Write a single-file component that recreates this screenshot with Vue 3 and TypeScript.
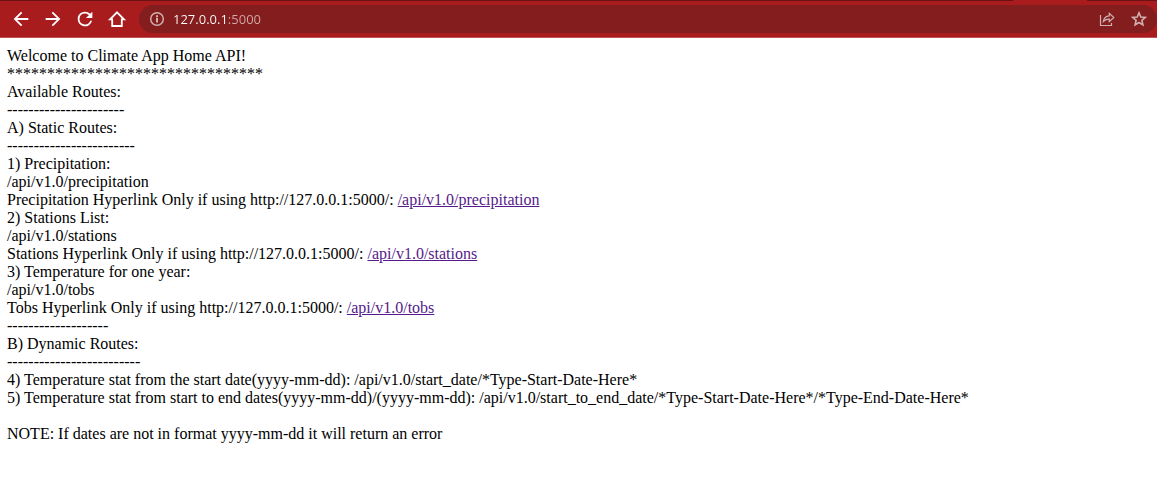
<script setup lang="ts">
import { ref } from 'vue'

interface Line {
  text: string
  link?: string
}

const address = ref('127.0.0.1:5000')
const starred = ref(false)

const dashes = (count: number): Line => ({ text: '-'.repeat(count) })
const hyperlink = (name: string, path: string): Line => ({
  text: `${name} Hyperlink Only if using http://127.0.0.1:5000/: `,
  link: path,
})

const lines: Line[] = [
  { text: 'Welcome to Climate App Home API!' },
  { text: '*'.repeat(32) },
  { text: 'Available Routes:' },
  dashes(22),
  { text: 'A) Static Routes:' },
  dashes(24),
  { text: '1) Precipitation:' },
  { text: '/api/v1.0/precipitation' },
  hyperlink('Precipitation', '/api/v1.0/precipitation'),
  { text: '2) Stations List:' },
  { text: '/api/v1.0/stations' },
  hyperlink('Stations', '/api/v1.0/stations'),
  { text: '3) Temperature for one year:' },
  { text: '/api/v1.0/tobs' },
  hyperlink('Tobs', '/api/v1.0/tobs'),
  dashes(19),
  { text: 'B) Dynamic Routes:' },
  dashes(25),
  { text: '4) Temperature stat from the start date(yyyy-mm-dd): /api/v1.0/start_date/*Type-Start-Date-Here*' },
  { text: '5) Temperature stat from start to end dates(yyyy-mm-dd)/(yyyy-mm-dd): /api/v1.0/start_to_end_date/*Type-Start-Date-Here*/*Type-End-Date-Here*' },
  { text: '' },
  { text: 'NOTE: If dates are not in format yyyy-mm-dd it will return an error' },
]
</script>

<template>
  <div class="browser">
    <div class="tab-edge"><span class="active-tab"></span></div>
    <header class="toolbar">
      <nav class="nav" aria-label="Browser navigation">
        <button type="button" class="icon-button" aria-label="Back">
          <svg viewBox="0 0 24 24" width="22" height="22"><path d="M20 11H7.83l5.59-5.59L12 4l-8 8 8 8 1.41-1.41L7.83 13H20z" /></svg>
        </button>
        <button type="button" class="icon-button" aria-label="Forward">
          <svg viewBox="0 0 24 24" width="22" height="22"><path d="M12 4l-1.41 1.41L16.17 11H4v2h12.17l-5.58 5.59L12 20l8-8z" /></svg>
        </button>
        <button type="button" class="icon-button" aria-label="Reload">
          <svg viewBox="0 0 24 24" width="22" height="22"><path d="M17.65 6.35A7.96 7.96 0 0 0 12 4a8 8 0 1 0 7.73 10h-2.08A6 6 0 1 1 12 6c1.66 0 3.14.69 4.22 1.78L13 11h7V4z" /></svg>
        </button>
        <button type="button" class="icon-button" aria-label="Home">
          <svg viewBox="0 0 22 22" width="22" height="22"><path class="stroke" d="M4 11.300 11 4.300l7 7H15.800V18H6.200v-6.700z" /></svg>
        </button>
      </nav>
      <div class="omnibox">
        <button type="button" class="icon-button muted" aria-label="Site information">
          <svg viewBox="0 0 16 16" width="16" height="16">
            <circle class="ring" cx="8" cy="8" r="6.300" />
            <path d="M7 7h2v4.500H7zM7 4.300h2v1.900H7z" />
          </svg>
        </button>
        <input v-model="address" class="address" type="text" aria-label="Address" spellcheck="false" />
        <button type="button" class="icon-button muted" aria-label="Share">
          <svg viewBox="0 0 16 16" width="16" height="16">
            <path class="line" d="M1.500 4v10.500h11V12" />
            <path class="line" d="M4.300 10.500C4.800 7 7 5 10.300 4.800V2.300L14.800 6.500l-4.500 4.200V8.200C7.700 8.200 5.800 8.900 4.300 10.500z" />
          </svg>
        </button>
        <button type="button" class="icon-button muted" aria-label="Bookmark this page" :aria-pressed="starred" @click="starred = !starred">
          <svg viewBox="0 0 16 16" width="16" height="16">
            <path class="star" :class="{ filled: starred }" d="M8 1.900l1.800 4.150 4.500.4-3.400 2.950 1 4.400L8 11.500l-3.900 2.300 1-4.400L1.700 6.450l4.500-.4z" />
          </svg>
        </button>
      </div>
    </header>
    <main class="page">
      <div v-for="(line, index) in lines" :key="index" class="line-row">{{ line.text }}<a v-if="line.link" :href="line.link">{{ line.link }}</a></div>
    </main>
  </div>
</template>

<style>
body {
  margin: 0;
  background: #fff;
}
</style>

<style scoped>
.tab-edge {
  display: flex;
  justify-content: flex-end;
  height: 1px;
  padding-right: 70px;
  background: #6d1212;
}

.active-tab {
  width: 74px;
  background: #a81c1e;
}

.toolbar {
  display: flex;
  align-items: center;
  gap: 11px;
  height: 36px;
  padding-left: 10px;
  background: #a81c1e;
  border-bottom: 1px solid #bd5254;
}

.nav {
  display: flex;
  gap: 10px;
}

.icon-button {
  display: flex;
  flex: none;
  padding: 0;
  border: 0;
  background: none;
  color: #fff;
  cursor: pointer;
}

.icon-button svg {
  fill: currentColor;
}

.icon-button .stroke {
  fill: none;
  stroke: currentColor;
  stroke-width: 1.8;
}

.icon-button .ring {
  fill: none;
  stroke: currentColor;
  stroke-width: 1.5;
}

.icon-button .line {
  fill: none;
  stroke: currentColor;
  stroke-width: 1.2;
}

.icon-button .star {
  fill: none;
  stroke: currentColor;
  stroke-width: 1.6;
}

.icon-button .star.filled {
  fill: currentColor;
}

.muted {
  color: #d0b0b0;
}

.omnibox {
  display: flex;
  flex: 1;
  align-items: center;
  gap: 16px;
  box-sizing: border-box;
  min-width: 0;
  height: 28px;
  padding: 0 10px;
  border-radius: 14px;
  background: #841d1e;
}

.address {
  flex: 1;
  min-width: 0;
  margin-left: -8px;
  padding: 0;
  border: 0;
  outline: 0;
  /* The host is white, the port after it is dimmed. */
  background: linear-gradient(to right, #fff 55px, #d3a9a9 55px);
  background-clip: text;
  -webkit-background-clip: text;
  color: transparent;
  caret-color: #fff;
  font: 13px/20px "Open Sans", "Noto Sans", sans-serif;
}

.page {
  padding: 9px 7px;
  color: #000;
  font: 16px/18px "Liberation Serif", "Times New Roman", serif;
}

.line-row {
  min-height: 18px;
}

.page a {
  color: #551a8b;
  text-decoration: underline;
}
</style>
